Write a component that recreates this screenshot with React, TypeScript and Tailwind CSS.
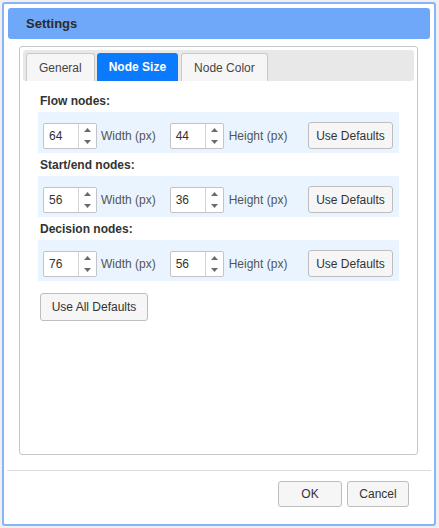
const font = { fontFamily: '"Liberation Sans", Arial, sans-serif' };

function Spinner() {
  return (
    <div className="flex w-[18px] flex-col border-l border-[#d4d4d4]">
      <div className="flex flex-1 items-center justify-center">
        <svg width="7" height="4" viewBox="0 0 7 4">
          <polygon points="0,4 3.5,0 7,4" fill="#6b6b6b" />
        </svg>
      </div>
      <div className="flex flex-1 items-center justify-center">
        <svg width="7" height="4" viewBox="0 0 7 4">
          <polygon points="0,0 3.5,4 7,0" fill="#6b6b6b" />
        </svg>
      </div>
    </div>
  );
}

function NumberField({ value }: { value: number }) {
  return (
    <div className="flex h-[26px] w-[54px] rounded-[2px] border border-[#c4c4c4] bg-white">
      <span className="flex flex-1 items-center pl-[5px] text-[12px] text-[#333]">{value}</span>
      <Spinner />
    </div>
  );
}

function Btn({ label, w }: { label: string; w: string }) {
  return (
    <button
      type="button"
      className={`h-[27px] ${w} rounded-[3px] border border-[#bdbdbd] bg-[#f6f6f6] text-[12px] text-[#333]`}
    >
      {label}
    </button>
  );
}

const sections = [
  { label: "Flow nodes:", w: 64, h: 44 },
  { label: "Start/end nodes:", w: 56, h: 36 },
  { label: "Decision nodes:", w: 76, h: 56 },
];

export default function App() {
  return (
    <div className="h-[528px] w-[439px] bg-[#f0f0f0] pl-[2px] pr-[3px] pt-[2px] pb-[2px]" style={font}>
      <div className="flex h-full flex-col rounded-[3px] border-2 border-[#8ab4f8] bg-white">
        {/* header */}
        <div className="mx-[4px] mt-[4px] flex h-[31px] items-center rounded-[3px] bg-[#6fa8f8] pl-[18px]">
          <h1 className="text-[13px] font-bold text-[#2b2b2b]">Settings</h1>
        </div>

        {/* tab panel */}
        <div className="ml-[15px] mr-[16px] mt-[7px] flex flex-1 flex-col rounded-[3px] border border-[#c6c6c6] p-[3px]">
          <div className="flex h-[31px] gap-[2px] rounded-[3px] bg-[#e8e8e8] pl-[3px] pt-[3px]">
            <div className="flex items-center rounded-t-[3px] border border-b-0 border-[#c9c9c9] bg-[#f6f6f6] px-[12px] text-[12px] text-[#454545]">
              General
            </div>
            <div className="flex items-center rounded-t-[3px] bg-[#0a7bff] px-[12px] text-[12px] font-bold text-white">
              Node Size
            </div>
            <div className="ml-[1px] flex items-center rounded-t-[3px] border border-b-0 border-[#c9c9c9] bg-[#f6f6f6] px-[12px] text-[12px] text-[#454545]">
              Node Color
            </div>
          </div>

          <div className="px-[15px] pt-[8px]">
            {sections.map((s) => (
              <div key={s.label}>
                <div className="flex h-[23px] items-center pl-[2px] text-[12px] font-bold text-[#333]">
                  {s.label}
                </div>
                <div className="flex h-[41px] items-center bg-[#eaf4ff] pl-[5px] pr-[6px] pt-[10px] pb-[4px]">
                  <NumberField value={s.w} />
                  <span className="ml-[4px] text-[12px] text-[#555]">Width (px)</span>
                  <div className="ml-[14px]">
                    <NumberField value={s.h} />
                  </div>
                  <span className="ml-[5px] text-[12px] text-[#555]">Height (px)</span>
                  <div className="ml-auto">
                    <Btn label="Use Defaults" w="w-[85px]" />
                  </div>
                </div>
              </div>
            ))}
            <div className="mt-[12px] pl-[2px]">
              <button
                type="button"
                className="h-[28px] w-[108px] rounded-[3px] border border-[#bdbdbd] bg-[#f6f6f6] text-[12px] text-[#333]"
              >
                Use All Defaults
              </button>
            </div>
          </div>
        </div>

        {/* footer */}
        <div className="mx-[3px] mt-[15px] border-t border-[#dcdcdc]" />
        <div className="flex justify-end gap-[5px] pr-[25px] pt-[10px] pb-[17px]">
          <button
            type="button"
            className="h-[26px] w-[64px] rounded-[3px] border border-[#bdbdbd] bg-[#f6f6f6] text-[12px] text-[#333]"
          >
            OK
          </button>
          <button
            type="button"
            className="h-[26px] w-[62px] rounded-[3px] border border-[#bdbdbd] bg-[#f6f6f6] text-[12px] text-[#333]"
          >
            Cancel
          </button>
        </div>
      </div>
    </div>
  );
}
